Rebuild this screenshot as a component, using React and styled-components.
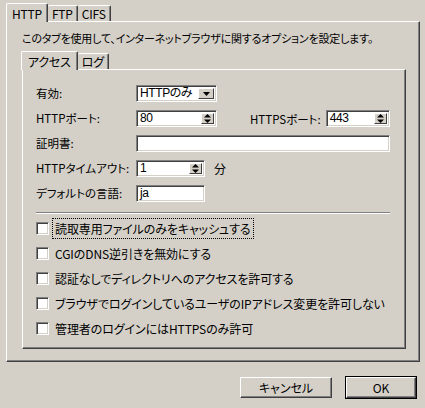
import React from 'react'
import styled, { createGlobalStyle } from 'styled-components'

const GlobalStyle = createGlobalStyle`
    html, body{
        margin: 0;
        padding: 0;
        background: #d4d0c8;
    }
    body{
        font-family: "Noto Sans CJK JP", "Liberation Sans", sans-serif;
        font-size: 11px;
        font-feature-settings: "palt";
        color: #000;
    }
`

const options = [
    '読取専用ファイルのみをキャッシュする',
    'CGIのDNS逆引きを無効にする',
    '認証なしでディレクトリへのアクセスを許可する',
    'ブラウザでログインしているユーザのIPアドレス変更を許可しない',
    '管理者のログインにはHTTPSのみ許可',
]

const Window = styled.div`
    width: 425px;
    height: 408px;
    box-sizing: border-box;
    padding: 3px 5px 0 6px;
    display: flex;
    flex-direction: column;
`

const TabRow = styled.div`
    display: flex;
    align-items: flex-end;
    height: 18px;
    position: relative;
    z-index: 1;
`

const Tab = styled.div`
    height: ${p => p.$active ? 19 : 16}px;
    margin-bottom: ${p => p.$active ? -1 : 0}px;
    padding: 0 ${p => p.$active ? p.$pad : 4}px;
    display: flex;
    align-items: center;
    box-sizing: border-box;
    background: #d4d0c8;
    border-top: 1px solid #fff;
    border-left: ${p => p.$first ? '1px solid #fff' : 'none'};
    border-right: 1px solid #404040;
    box-shadow: inset -1px 0 0 #808080;
    border-radius: 2px 2px 0 0;
    font-size: 12px;
    letter-spacing: -0.2px;
`

const Panel = styled.div`
    box-sizing: border-box;
    width: ${p => p.$w}px;
    height: ${p => p.$h}px;
    background: #d4d0c8;
    border-top: 1px solid #fff;
    border-left: 1px solid #fff;
    border-right: 1px solid #404040;
    border-bottom: 1px solid #404040;
    box-shadow: inset -1px -1px 0 #808080;
`

const OuterBody = styled(Panel)`
    padding: 9px 0 0 15px;
    display: flex;
    flex-direction: column;
`

const Description = styled.div`
    height: 14px;
    line-height: 14px;
    letter-spacing: -0.2px;
    margin-bottom: 6px;
`

const InnerTabs = styled.div`
    margin-left: -1px;
`

const InnerBody = styled(Panel)`
    padding: 15px 0 0 13px;
`

const Form = styled.div`
    display: grid;
    grid-template-columns: 100px 1fr;
    row-gap: 8px;
    width: 354px;
`

const Label = styled.div`
    height: 17px;
    line-height: 17px;
    font-size: 11.5px;
`

const Line = styled.div`
    display: flex;
    align-items: center;
    height: 17px;
`

const Field = styled.div`
    position: relative;
    box-sizing: border-box;
    width: ${p => p.$w}px;
    height: 17px;
    background: #fff;
    border-top: 1px solid #808080;
    border-left: 1px solid #808080;
    border-right: 1px solid #fff;
    border-bottom: 1px solid #fff;
    box-shadow: inset 1px 1px 0 #404040, inset -1px -1px 0 #d4d0c8;
    padding: 0 0 0 3px;
    font-size: 12px;
    line-height: 15px;
    font-family: "Liberation Sans", "Noto Sans CJK JP", sans-serif;
    letter-spacing: -0.4px;
`

const SideButton = styled.div`
    position: absolute;
    top: 2px;
    right: 2px;
    bottom: 2px;
    width: ${p => p.$w}px;
    background: #d4d0c8;
    box-sizing: border-box;
    border-top: 1px solid #fff;
    border-left: 1px solid #fff;
    border-right: 1px solid #404040;
    border-bottom: 1px solid #404040;
    display: flex;
    align-items: center;
    justify-content: center;
`

const Unit = styled.span`
    margin-left: 9px;
    font-size: 12px;
`

const PortLabel = styled.span`
    margin-left: 33px;
    margin-right: 5px;
    font-size: 11.5px;
`

const Separator = styled.div`
    width: 354px;
    height: 0;
    border-top: 1px solid #808080;
    border-bottom: 1px solid #fff;
    margin: 10px 0 8px;
`

const Options = styled.div`
    display: flex;
    flex-direction: column;
    gap: 12px;
`

const OptionRow = styled.div`
    display: flex;
    align-items: center;
    height: 13px;
`

const Check = styled.div`
    width: 13px;
    height: 13px;
    box-sizing: border-box;
    background: #fff;
    border-top: 1px solid #808080;
    border-left: 1px solid #808080;
    border-right: 1px solid #fff;
    border-bottom: 1px solid #fff;
    box-shadow: inset 1px 1px 0 #404040, inset -1px -1px 0 #d4d0c8;
    flex: none;
`

const OptionText = styled.span`
    margin-left: 4px;
    padding: 1px 2px;
    font-size: 12px;
    letter-spacing: -0.1px;
    outline: ${p => p.$focus ? '1px dotted #000' : 'none'};
`

const Footer = styled.div`
    display: flex;
    justify-content: flex-end;
    gap: 14px;
    margin-top: 15px;
    padding-right: 4px;
`

const Button = styled.div`
    box-sizing: border-box;
    width: ${p => p.$w}px;
    height: 21px;
    display: flex;
    align-items: center;
    justify-content: center;
    font-size: 12px;
    background: #d4d0c8;
    border-top: 1px solid #fff;
    border-left: 1px solid #fff;
    border-right: 1px solid #404040;
    border-bottom: 1px solid #404040;
    box-shadow: inset -1px -1px 0 #808080;
    outline: ${p => p.$default ? '1px solid #000' : 'none'};
    outline-offset: 0;
`

const DropArrow = () => (
    <svg width="7" height="4" viewBox="0 0 7 4"><path d="M0 0h7L3.5 4z" fill="#000" /></svg>
)

const SpinArrows = () => (
    <svg width="7" height="9" viewBox="0 0 7 9">
        <path d="M3.5 0L7 3.5H0z" fill="#000" />
        <path d="M0 5.5h7L3.5 9z" fill="#000" />
    </svg>
)

const Spin = ({ w, value }) => (
    <Field $w={w}>
        {value}
        <SideButton $w={13}><SpinArrows /></SideButton>
    </Field>
)

const App = () => {
    return (
        <>
            <GlobalStyle />
            <Window>
                <TabRow>
                    <Tab $active $first $pad={5}>HTTP</Tab>
                    <Tab>FTP</Tab>
                    <Tab>CIFS</Tab>
                </TabRow>
                <OuterBody $w={414} $h={341}>
                    <Description>このタブを使用して、インターネットブラウザに関するオプションを設定します。</Description>
                    <InnerTabs>
                        <TabRow>
                            <Tab $active $first $pad={6}>アクセス</Tab>
                            <Tab>ログ</Tab>
                        </TabRow>
                    </InnerTabs>
                    <InnerBody $w={384} $h={280}>
                        <Form>
                            <Label>有効:</Label>
                            <Line>
                                <Field $w={81}>
                                    HTTPのみ
                                    <SideButton $w={16}><DropArrow /></SideButton>
                                </Field>
                            </Line>

                            <Label>HTTPポート:</Label>
                            <Line>
                                <Spin w={81} value="80" />
                                <PortLabel>HTTPSポート:</PortLabel>
                                <Spin w={64} value="443" />
                            </Line>

                            <Label>証明書:</Label>
                            <Line>
                                <Field $w={254} />
                            </Line>

                            <Label>HTTPタイムアウト:</Label>
                            <Line>
                                <Spin w={69} value="1" />
                                <Unit>分</Unit>
                            </Line>

                            <Label>デフォルトの言語:</Label>
                            <Line>
                                <Field $w={69}>ja</Field>
                            </Line>
                        </Form>
                        <Separator />
                        <Options>
                            {options.map((text, i) => (
                                <OptionRow key={text}>
                                    <Check />
                                    <OptionText $focus={i === 0}>{text}</OptionText>
                                </OptionRow>
                            ))}
                        </Options>
                    </InnerBody>
                </OuterBody>
                <Footer>
                    <Button $w={92}>キャンセル</Button>
                    <Button $w={70} $default>OK</Button>
                </Footer>
            </Window>
        </>
    )
}

export default App
